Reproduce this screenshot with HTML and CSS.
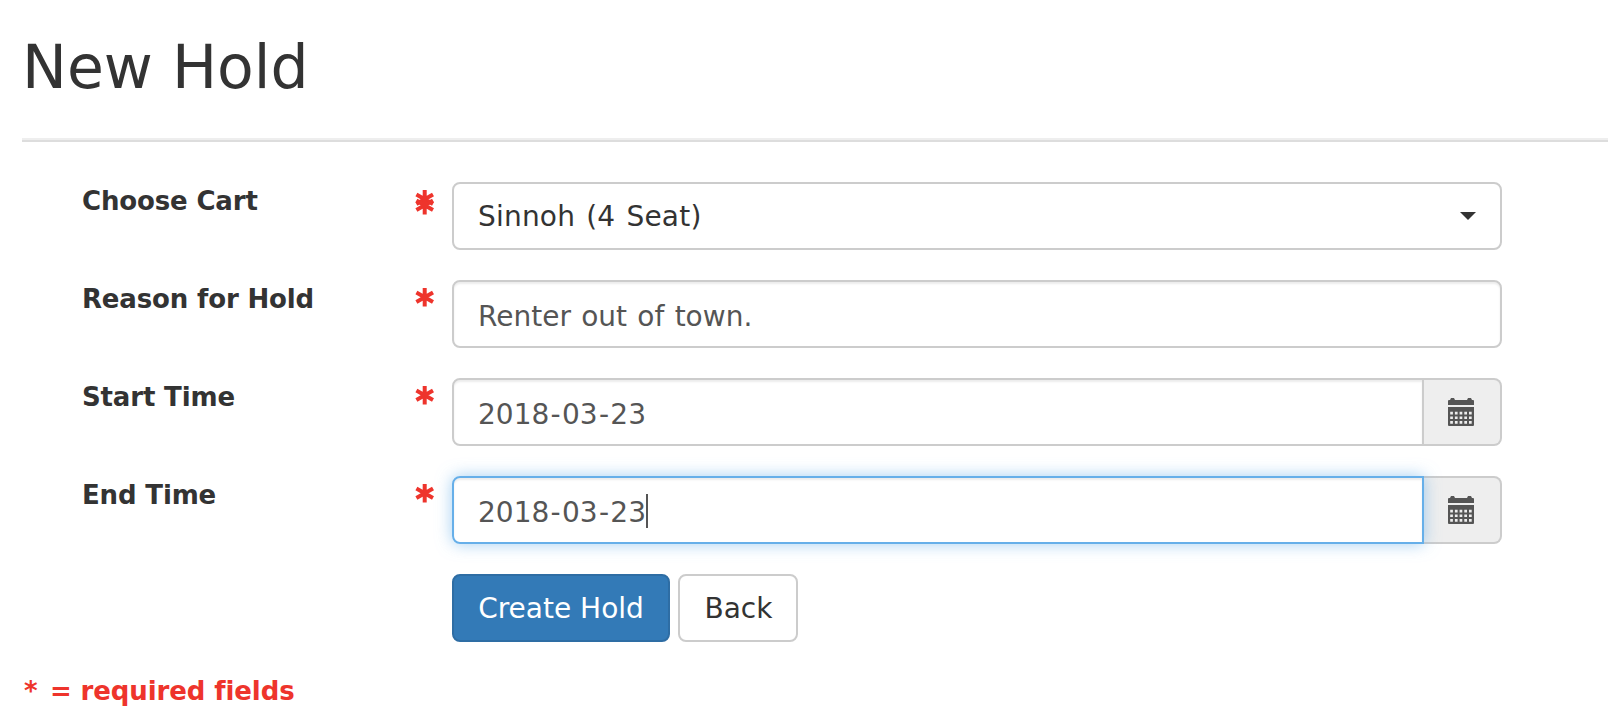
FILE: index.html
```html
<!DOCTYPE html>
<html lang="en">
<head>
<meta charset="utf-8">
<title>New Hold</title>
<link rel="stylesheet" href="styles.css">
</head>
<body>
<svg class="defs" aria-hidden="true">
  <symbol id="asterisk" viewBox="0 0 20 20">
    <path d="M9.7 0V18.6M1.4 4.6L18 14M18 4.6L1.4 14" fill="none" stroke="#ee342c" stroke-width="4"/>
  </symbol>
  <symbol id="calendar" viewBox="0 0 26 28">
    <path fill="#555" fill-rule="evenodd" d="M0 7V3Q0 2 1 2H2L3 0H6L7 2H19L20 0H23L24 2H25Q26 2 26 3V7ZM0 9H26V27Q26 28 25 28H1Q0 28 0 27Z"/>
    <path d="M2.2 15.1H24M2.2 19.8H24M2.2 24.4H24" fill="none" stroke="#eee" stroke-width="2.6" stroke-dasharray="2.7 2"/>
  </symbol>
</svg>
<main class="page">
  <h1 class="title">New Hold</h1>
  <form class="form">
    <div class="row">
      <label class="label">Choose Cart</label>
      <span class="marks"><svg class="mark"><use href="#asterisk"/></svg><svg class="mark second"><use href="#asterisk"/></svg></span>
      <div class="control select"><span class="choice">Sinnoh (4 Seat)</span><svg class="caret" viewBox="0 0 16 8"><path d="M0 0H16L8 8Z" fill="#333"/></svg></div>
    </div>
    <div class="row">
      <label class="label">Reason for Hold</label>
      <span class="marks"><svg class="mark"><use href="#asterisk"/></svg></span>
      <div class="control input"><span class="reason">Renter out of town.</span></div>
    </div>
    <div class="row">
      <label class="label">Start Time</label>
      <span class="marks"><svg class="mark"><use href="#asterisk"/></svg></span>
      <div class="group">
        <div class="control input"><span class="date">2018<i>-</i>03<i>-</i>23</span></div>
        <div class="addon"><svg class="calendar"><use href="#calendar"/></svg></div>
      </div>
    </div>
    <div class="row">
      <label class="label">End Time</label>
      <span class="marks"><svg class="mark"><use href="#asterisk"/></svg></span>
      <div class="group">
        <div class="control input focused"><span class="date">2018<i>-</i>03<i>-</i>23</span><span class="cursor"></span></div>
        <div class="addon"><svg class="calendar"><use href="#calendar"/></svg></div>
      </div>
    </div>
    <div class="actions">
      <button class="btn primary" type="button">Create Hold</button>
      <button class="btn back" type="button">Back</button>
    </div>
  </form>
  <p class="note"><span class="star">*</span> = required fields</p>
</main>
</body>
</html>
```
FILE: styles.css
```css
* { box-sizing: border-box; }
body {
  margin: 0;
  background: #fff;
  color: #333;
  font: 28px/40px Verdana, "DejaVu Sans", sans-serif;
  overflow: hidden;
}
.defs { display: none; }
.page { height: 720px; padding: 32px 0 0 22px; }
.title {
  height: 110px;
  margin: 0;
  padding-top: 1px;
  border-bottom: 2px solid #ddd;
  box-shadow: inset 0 -2px #eee;
  font-size: 60px;
  line-height: 68px;
  font-weight: 400;
}
.form { display: flex; flex-direction: column; gap: 30px; padding: 40px 106px 0 60px; }
.row { display: grid; grid-template-columns: 333px 37px 1050px; height: 68px; }
.label {
  padding-top: 1px;
  font-size: 26px;
  line-height: 36px;
  font-weight: 700;
  letter-spacing: -.15px;
  white-space: nowrap;
}
.marks { position: relative; padding-top: 8px; }
.mark { display: block; width: 20px; height: 20px; }
.mark.second { position: absolute; top: 14px; left: 0; }
.control {
  display: flex;
  align-items: center;
  flex: 1;
  padding: 0 24px;
  border: 2px solid #ccc;
  border-radius: 8px;
  white-space: nowrap;
}
.select { justify-content: space-between; }
.choice { padding-top: 2px; letter-spacing: .2px; word-spacing: 2px; }
.reason { word-spacing: 1.4px; }
.input { color: #555; padding-top: 5px; box-shadow: inset 0 2px 2px rgba(0,0,0,.075); }
.group { display: flex; }
.group .control { border-radius: 8px 0 0 8px; }
.addon {
  display: flex;
  align-items: center;
  justify-content: center;
  width: 78px;
  border: 2px solid #ccc;
  border-left: 0;
  border-radius: 0 8px 8px 0;
  background: #eee;
}
.group .focused {
  position: relative;
  border-color: #66afe9;
  box-shadow: inset 0 2px 2px rgba(0,0,0,.075), 0 0 16px rgba(102,175,233,.6);
}
.caret { width: 16px; height: 8px; }
.calendar { width: 26px; height: 28px; margin-right: 2px; }
.date i { font-style: normal; margin: 0 1.3px; }
.cursor { width: 2px; height: 34px; margin-top: -3px; background: #555; }
.actions { display: flex; gap: 8px; padding-left: 370px; }
.btn {
  height: 68px;
  padding: 2px 0 0;
  border: 2px solid #ccc;
  border-radius: 8px;
  background: #fff;
  color: #333;
  font: inherit;
}
.primary { width: 218px; border-color: #2e6da4; background: #337ab7; color: #fff; }
.back { width: 120px; padding-left: 1px; }
.note {
  margin: 31px 0 0 2px;
  color: #ee342c;
  font-size: 26px;
  line-height: 36px;
  font-weight: 700;
  letter-spacing: -.1px;
}
.star { margin-right: 3.5px; }
```
